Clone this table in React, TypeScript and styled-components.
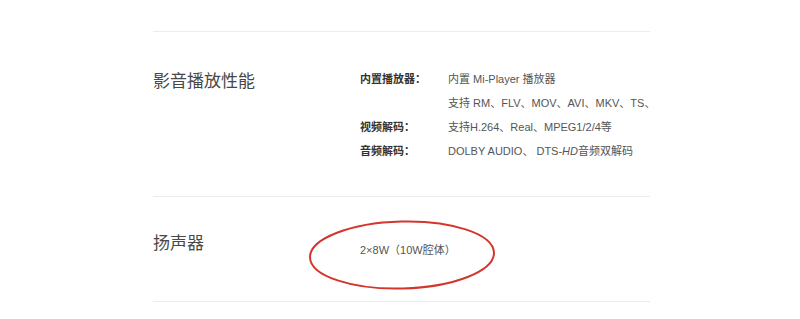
import styled, { createGlobalStyle } from "styled-components";

type SpecRow = {
    label?: string;
    value: React.ReactNode;
};

const GlobalStyle = createGlobalStyle`
    body {
        margin: 0;
        background: #fff;
        font-family: "Liberation Sans", "Noto Sans CJK SC", sans-serif;
    }
`;

const playerRows: SpecRow[] = [
    { label: "内置播放器：", value: "内置 Mi-Player 播放器" },
    { value: "支持 RM、FLV、MOV、AVI、MKV、TS、" },
    { label: "视频解码：", value: "支持H.264、Real、MPEG1/2/4等" },
    {
        label: "音频解码：",
        value: (
            <>
                DOLBY AUDIO、 DTS-<i>HD</i>音频双解码
            </>
        ),
    },
];

const App = () => {
    return (
        <>
            <GlobalStyle />
            <Page>
                <Section $padTop={34} $padBottom={34}>
                    <Title $lineHeight={28}>影音播放性能</Title>
                    <Specs>
                        {playerRows.map((row, i) => (
                            <Row key={i}>
                                <Label>{row.label ?? ""}</Label>
                                <Value>{row.value}</Value>
                            </Row>
                        ))}
                    </Specs>
                </Section>
                <Section $padTop={34} $padBottom={39} $last>
                    <Title $lineHeight={22}>扬声器</Title>
                    <Specs $offset={7}>
                        <PlainValue>2×8W（10W腔体）</PlainValue>
                    </Specs>
                    <Mark width="188" height="72" viewBox="0 0 188 72">
                        <ellipse
                            cx="94"
                            cy="36"
                            rx="92"
                            ry="33.5"
                            fill="none"
                            stroke="#d4352c"
                            strokeWidth="2"
                            transform="rotate(-1.5 94 36)"
                        />
                    </Mark>
                </Section>
            </Page>
        </>
    );
};

const Page = styled.div`
    width: 497px;
    padding: 31px 0 0 153px;
`;

const Section = styled.div<{ $padTop: number; $padBottom: number; $last?: boolean }>`
    position: relative;
    display: grid;
    grid-template-columns: 207px 1fr;
    align-items: start;
    padding: ${({ $padTop }) => $padTop}px 0 ${({ $padBottom }) => $padBottom}px;
    border-top: 1px solid #ececec;
    border-bottom: ${({ $last }) => ($last ? "1px solid #ececec" : "none")};
`;

const Title = styled.h2<{ $lineHeight: number }>`
    margin: 0;
    font-size: 17px;
    font-weight: normal;
    line-height: ${({ $lineHeight }) => $lineHeight}px;
    color: #484848;
    font-family: "Noto Sans CJK SC", "Liberation Sans", sans-serif;
`;

const Specs = styled.div<{ $offset?: number }>`
    display: flex;
    flex-direction: column;
    padding-top: ${({ $offset }) => $offset ?? 0}px;
`;

const Row = styled.div`
    display: grid;
    grid-template-columns: 88px auto;
    height: 24px;
    align-items: center;
    font-size: 11px;
    white-space: nowrap;
`;

const Label = styled.span`
    font-weight: bold;
    color: #333;
`;

const Value = styled.span`
    color: #555;
`;

const PlainValue = styled.span`
    font-size: 11px;
    line-height: 24px;
    color: #555;
`;

const Mark = styled.svg`
    position: absolute;
    left: 155px;
    top: 22px;
    pointer-events: none;
`;

export default App;
